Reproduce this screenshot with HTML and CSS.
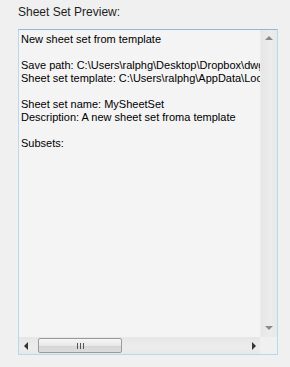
FILE: index.html
```html
<!DOCTYPE html>
<html lang="en">
<head>
    <meta charset="UTF-8">
    <meta name="viewport" content="width=device-width, initial-scale=1.0">
    <title>Sheet Set Preview</title>
    <link rel="stylesheet" href="styles.css">
</head>
<body>

    <div class="panel">
        <div class="label">Sheet Set Preview:</div>
        <div class="preview">
            <div class="text">New sheet set from template

Save path: C:\Users\ralphg\Desktop\Dropbox\dwg\MySheetSet
Sheet set template: C:\Users\ralphg\AppData\Local\Autodesk

Sheet set name: MySheetSet
Description: A new sheet set froma template

Subsets:</div>
            <div class="vscroll">
                <span class="arrow up"></span>
                <span class="arrow down"></span>
            </div>
            <div class="hscroll">
                <span class="arrow left"></span>
                <div class="track">
                    <div class="thumb"><span class="grip"></span></div>
                </div>
                <span class="arrow right"></span>
            </div>
            <div class="corner"></div>
        </div>
    </div>

</body>
</html>
```

FILE: styles.css
```css
body {
    margin: 0;
    background-color: #f0f0f0;
    font-family: "Liberation Sans", Arial, sans-serif;
    font-size: 11px;
    color: #000;
}
.panel {
    width: 290px;
    height: 367px;
    padding: 5px 0 0 18px;
    box-sizing: border-box;
}
.label {
    font-size: 12px;
    height: 14px;
    line-height: 14px;
    margin-bottom: 10px;
    color: #1e1e1e;
}
.preview {
    width: 260px;
    height: 326px;
    box-sizing: border-box;
    border: 1px solid #b7d9ed;
    border-top-color: #90b8d8;
    background: #f4f4f4;
    display: grid;
    grid-template-columns: 1fr 17px;
    grid-template-rows: 1fr 17px;
}
.text {
    white-space: pre;
    overflow: hidden;
    line-height: 13px;
    padding: 3px 0 0 2px;
}
.vscroll {
    background: linear-gradient(to right, #e6e6e6, #ececec 60%, #e8e8e8);
    border-left: 1px solid #ececec;
    display: flex;
    flex-direction: column;
    justify-content: space-between;
    align-items: center;
    padding: 6px 0 7px;
}
.hscroll {
    background: linear-gradient(#e6e6e6, #ececec 60%, #e8e8e8);
    display: flex;
    align-items: center;
    padding: 0 4px 0 5px;
}
.corner {
    background: #f0f0f0;
}
.track {
    flex: 1;
    height: 100%;
    display: flex;
    align-items: center;
    padding: 0 4px 0 10px;
}
.thumb {
    width: 84px;
    height: 15px;
    box-sizing: border-box;
    border: 1px solid #9a9a9a;
    border-radius: 2px;
    background: linear-gradient(#f6f6f6, #e8e8e8 50%, #d6d6d6 51%, #dcdcdc);
    display: flex;
    align-items: center;
    justify-content: center;
}
.grip {
    width: 7px;
    height: 6px;
    background: repeating-linear-gradient(to right, #555 0 1px, transparent 1px 3px);
}
.arrow {
    width: 0;
    height: 0;
    border: 4px solid transparent;
}
.arrow.up {
    border-bottom-color: #8a8a8a;
    border-top-width: 0;
}
.arrow.down {
    border-top-color: #8a8a8a;
    border-bottom-width: 0;
}
.arrow.left {
    border-right-color: #333;
    border-left-width: 0;
}
.arrow.right {
    border-left-color: #333;
    border-right-width: 0;
}
```
